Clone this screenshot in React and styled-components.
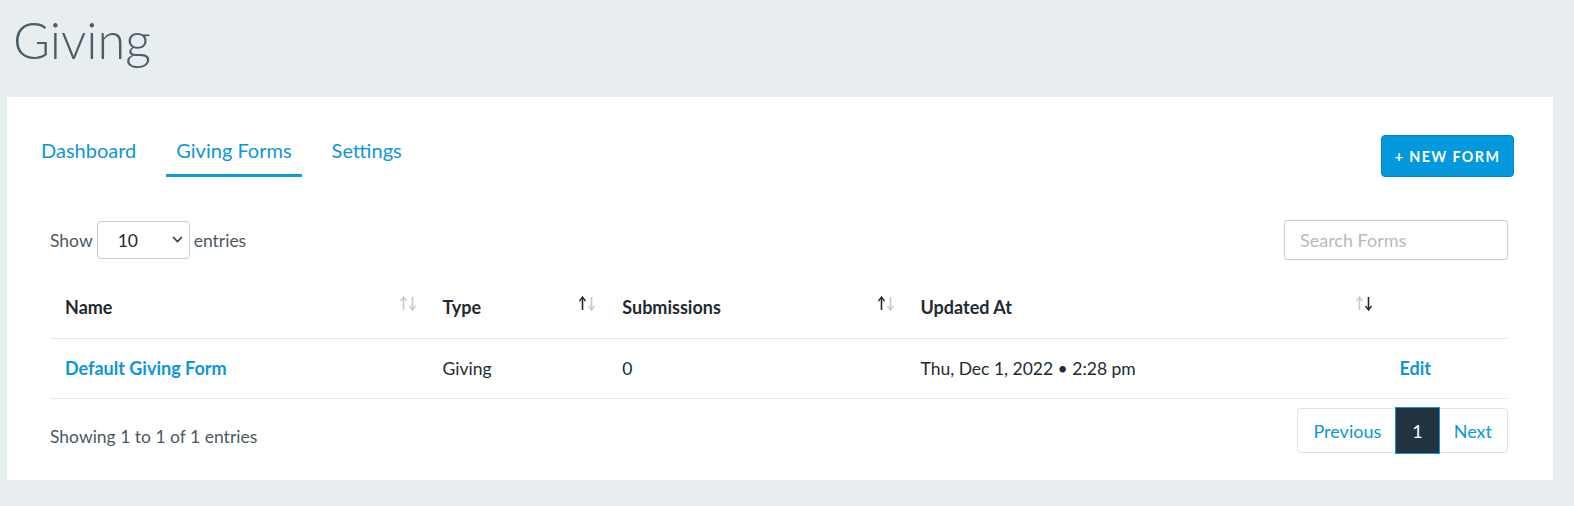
import React from "react";
import styled, { createGlobalStyle } from "styled-components";

const GlobalStyle = createGlobalStyle`
  html, body {
    margin: 0;
    padding: 0;
    background: #e8edf0;
    font-family: Lato, "Open Sans", sans-serif;
    color: #212b32;
  }
`;

const Page = styled.div`
  padding: 0 21px 28px 7px;
`;

const Title = styled.h1`
  margin: 0;
  padding: 10px 0 0 6px;
  height: 97px;
  box-sizing: border-box;
  font-size: 50.5px;
  font-weight: 300;
  line-height: 60px;
  color: #4d5d68;
`;

const Card = styled.div`
  background: #fff;
  padding: 33px 39px 27px 24px;
`;

const TopBar = styled.div`
  display: flex;
  align-items: flex-start;
  justify-content: space-between;
`;

const Tabs = styled.nav`
  display: flex;
  gap: 20px;
`;

const Tab = styled.a`
  display: block;
  font-size: 20px;
  line-height: 24px;
  padding: 8px 10px 12px;
  color: #0d96d9;
  border-bottom: 3px solid ${(p) => (p.$active ? "#0d96d9" : "transparent")};
  cursor: pointer;
`;

const NewButton = styled.button`
  margin-top: 5px;
  height: 42px;
  width: 133px;
  background: #0399dc;
  border: 1px solid #0784bf;
  border-radius: 4px;
  color: #fff;
  font-family: Lato, sans-serif;
  font-weight: 700;
  font-size: 14.3px;
  letter-spacing: 1.4px;
  text-transform: uppercase;
`;

const TableArea = styled.div`
  padding: 43px 6px 0 19px;
`;

const Controls = styled.div`
  display: flex;
  justify-content: space-between;
  align-items: center;
  margin-bottom: 20px;
`;

const ShowLabel = styled.label`
  display: flex;
  align-items: center;
  gap: 4px;
  font-size: 17.5px;
  color: #4a5963;
`;

const SelectBox = styled.div`
  position: relative;
  width: 93px;
  height: 38px;
  box-sizing: border-box;
  border: 1px solid #c5ccd2;
  border-radius: 4px;
  display: flex;
  align-items: center;
  padding-left: 20px;
  font-size: 17.5px;
  color: #212b32;
`;

const Chevron = styled.svg`
  position: absolute;
  right: 6px;
  top: 14px;
`;

const Search = styled.input`
  width: 224px;
  height: 40px;
  box-sizing: border-box;
  border: 1px solid #c5ccd2;
  border-radius: 3px;
  padding: 0 15px;
  font-family: Lato, sans-serif;
  font-size: 18px;
  color: #212b32;
  &::placeholder {
    color: #b3bbc1;
  }
`;

const Table = styled.table`
  width: 100%;
  table-layout: fixed;
  border-collapse: collapse;
`;

const Th = styled.th`
  position: relative;
  text-align: left;
  font-weight: 700;
  font-size: 18px;
  height: 54px;
  padding: 0 15px 4px;
  border-bottom: 1px solid #e3e7ea;
  color: #1f2a30;
`;

const Td = styled.td`
  font-size: 17.5px;
  height: 58px;
  padding: 0 15px 1px;
  border-bottom: 1px solid #e3e7ea;
  color: #212b32;
`;

const Link = styled.a`
  color: #0d96d9;
  font-weight: 700;
  font-size: 18px;
  cursor: pointer;
`;

const SortIcon = styled.span`
  position: absolute;
  right: 12px;
  top: 16px;
  display: flex;
  gap: 2px;
`;

const Footer = styled.div`
  display: flex;
  justify-content: space-between;
  align-items: center;
  padding-top: 9px;
`;

const Info = styled.div`
  padding-top: 11px;
  font-size: 17.5px;
  color: #4a5963;
`;

const Pager = styled.div`
  display: flex;
  border: 1px solid #dde2e6;
  border-radius: 4px;
  height: 45px;
  box-sizing: border-box;
`;

const PageBtn = styled.a`
  display: flex;
  align-items: center;
  justify-content: center;
  padding: 0 ${(p) => p.$pad}px;
  font-size: 18px;
  color: ${(p) => (p.$active ? "#fff" : "#0d96d9")};
  background: ${(p) => (p.$active ? "#22343f" : "transparent")};
  outline: ${(p) => (p.$active ? "1px solid #0d96d9" : "none")};
  margin: ${(p) => (p.$active ? "-1px 0" : "0")};
  cursor: pointer;
`;

function Arrow({ down, dark }) {
  const c = dark ? "#1f2a30" : "#c4c9cd";
  return (
    <svg width="7" height="15" viewBox="0 0 7 15">
      {down ? (
        <>
          <line x1="3.5" y1="1" x2="3.5" y2="13" stroke={c} strokeWidth="1.6" />
          <path d="M0.5 10 L3.5 14 L6.5 10" fill="none" stroke={c} strokeWidth="1.4" />
        </>
      ) : (
        <>
          <line x1="3.5" y1="2" x2="3.5" y2="14" stroke={c} strokeWidth="1.6" />
          <path d="M0.5 5 L3.5 1 L6.5 5" fill="none" stroke={c} strokeWidth="1.4" />
        </>
      )}
    </svg>
  );
}

function Sort({ up, down }) {
  return (
    <SortIcon>
      <Arrow dark={up} />
      <Arrow down dark={down} />
    </SortIcon>
  );
}

const columns = [
  { label: "Name", width: 376, up: false, down: false },
  { label: "Type", width: 179, up: true, down: false },
  { label: "Submissions", width: 297, up: true, down: false },
  { label: "Updated At", width: 477, up: false, down: true },
  { label: "", width: 123, noSort: true },
];

export default function App() {
  return (
    <>
      <GlobalStyle />
      <Page>
        <Title>Giving</Title>
        <Card>
          <TopBar>
            <Tabs>
              <Tab>Dashboard</Tab>
              <Tab $active>Giving Forms</Tab>
              <Tab>Settings</Tab>
            </Tabs>
            <NewButton>+ New Form</NewButton>
          </TopBar>
          <TableArea>
            <Controls>
              <ShowLabel>
                Show
                <SelectBox>
                  10
                  <Chevron width="11" height="7" viewBox="0 0 11 7">
                    <path d="M1 1 L5.5 5.5 L10 1" fill="none" stroke="#333" strokeWidth="1.6" />
                  </Chevron>
                </SelectBox>
                entries
              </ShowLabel>
              <Search placeholder="Search Forms" />
            </Controls>
            <Table>
              <colgroup>
                {columns.map((c, i) => (
                  <col key={i} style={{ width: c.width }} />
                ))}
              </colgroup>
              <thead>
                <tr>
                  {columns.map((c, i) => (
                    <Th key={i}>
                      {c.label}
                      {!c.noSort && <Sort up={c.up} down={c.down} />}
                    </Th>
                  ))}
                </tr>
              </thead>
              <tbody>
                <tr>
                  <Td>
                    <Link>Default Giving Form</Link>
                  </Td>
                  <Td>Giving</Td>
                  <Td>0</Td>
                  <Td>Thu, Dec 1, 2022 • 2:28 pm</Td>
                  <Td>
                    <Link>Edit</Link>
                  </Td>
                </tr>
              </tbody>
            </Table>
            <Footer>
              <Info>Showing 1 to 1 of 1 entries</Info>
              <Pager>
                <PageBtn $pad={15}>Previous</PageBtn>
                <PageBtn $pad={16} $active>
                  1
                </PageBtn>
                <PageBtn $pad={15}>Next</PageBtn>
              </Pager>
            </Footer>
          </TableArea>
        </Card>
      </Page>
    </>
  );
}
